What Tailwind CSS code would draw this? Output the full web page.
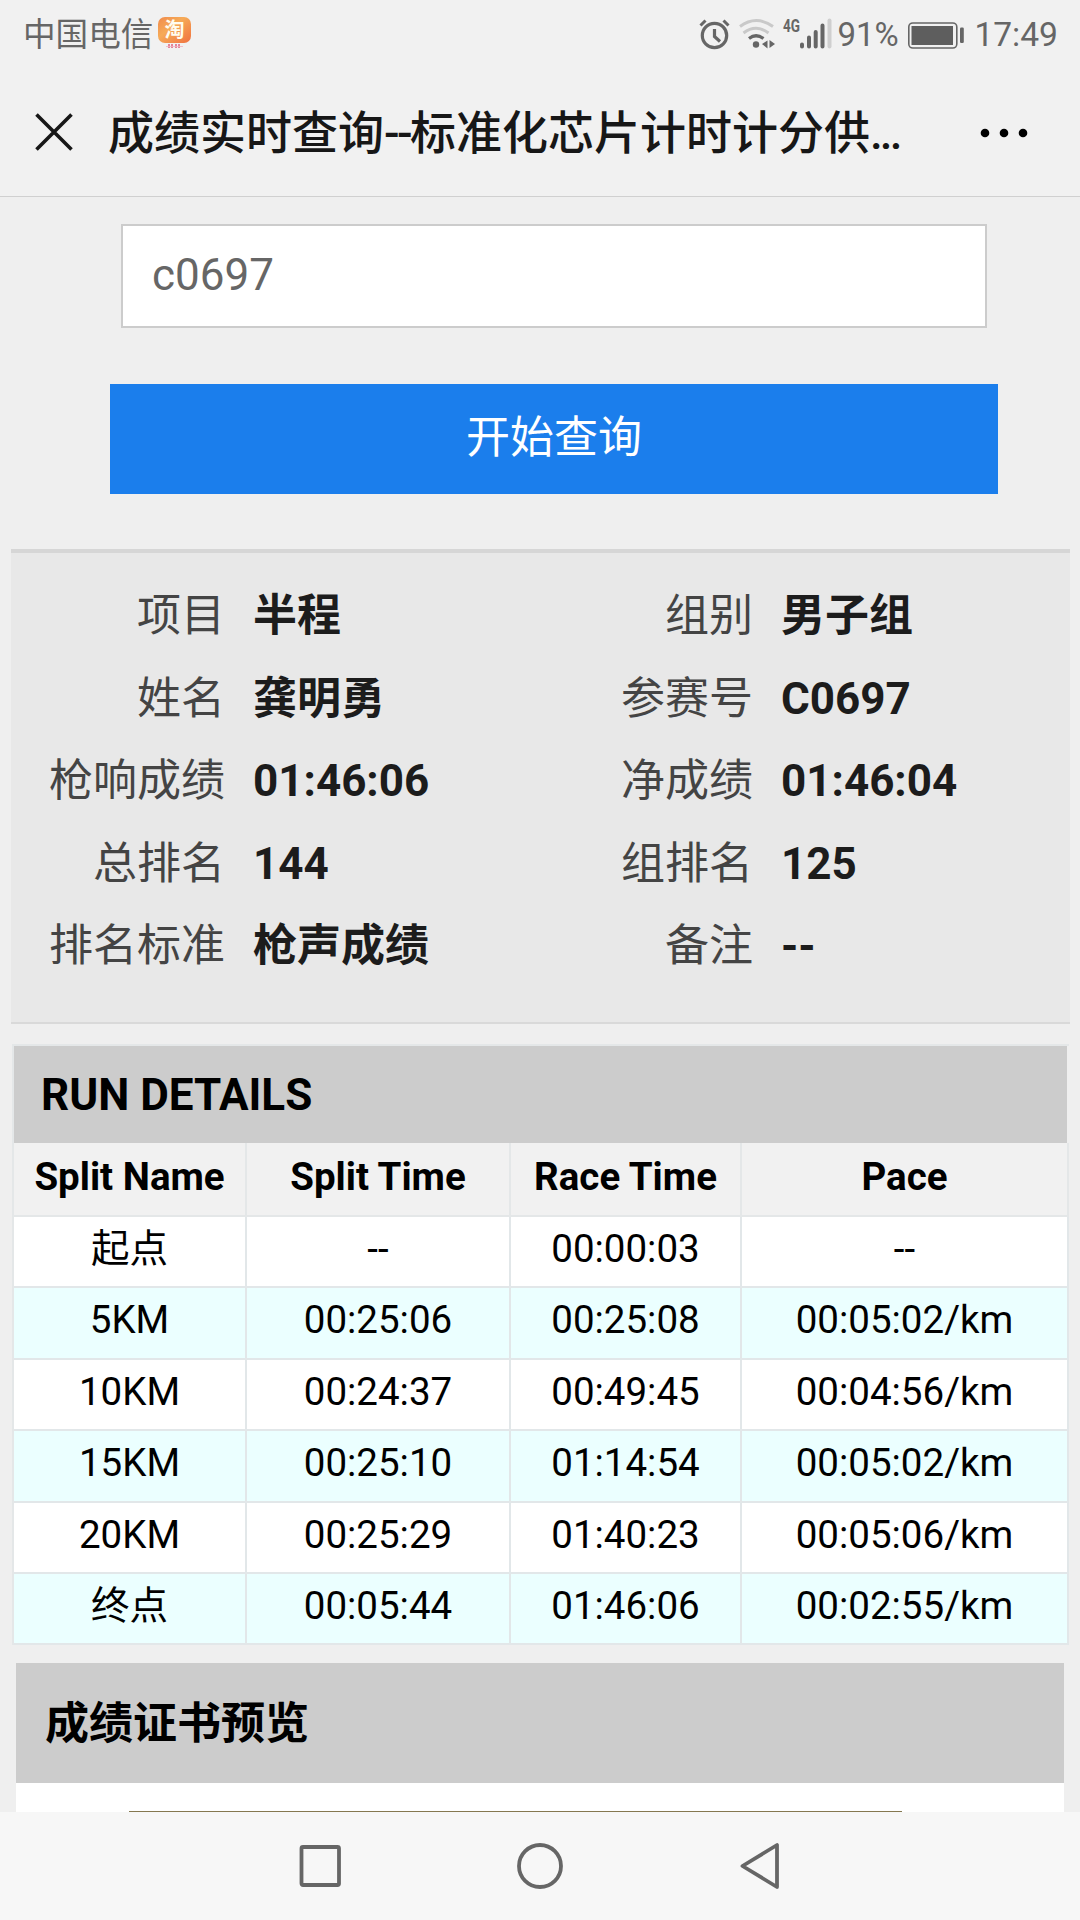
<!DOCTYPE html>
<html lang="zh-CN">
<head>
<meta charset="utf-8">
<title>成绩实时查询</title>
<script src="https://cdn.jsdelivr.net/npm/@tailwindcss/browser@4"></script>
</head>
<body class="bg-[#efefef]">
<div class="flex h-[1920px] w-[1080px] flex-col overflow-hidden bg-[#efefef] font-[Roboto,'Noto_Sans_CJK_SC',sans-serif] text-black">

  <!-- Status bar and title -->
  <header class="h-[197px] shrink-0 border-b border-[#d0d0d0] bg-[#f1f1f1] text-[#666]">
    <div class="flex h-[70px] items-center pl-[23px] pr-[22px]">
      <span class="w-[131px] text-[32.6px] leading-[70px] whitespace-nowrap">中国电信</span>
      <svg class="ml-[3px] h-[40px] w-[36px] overflow-visible" viewBox="0 0 36 40">
        <defs><linearGradient id="tb" x1="0" y1="0" x2="1" y2="1"><stop offset="0" stop-color="#f08a4c"/><stop offset=".4" stop-color="#f6ab58"/><stop offset="1" stop-color="#f0713f"/></linearGradient></defs>
        <rect x="1" y="2" width="33" height="26" rx="7" fill="url(#tb)"/>
        <text x="17.500" y="22" text-anchor="middle" font-size="20" font-weight="700" fill="#fffdf0" font-family="Noto Sans CJK SC, sans-serif">淘</text>
        <path d="M12 29v4M15 29v4M19 29v4M22 29v4" stroke="#e0607a" stroke-width="1.500"/>
        <path d="M9 31.500h17" stroke="#f0b0c0" stroke-width=".8"/>
      </svg>
      <svg class="ml-auto h-[40px] w-[140px]" viewBox="698 14 140 40" fill="none" stroke="#666">
        <circle cx="714.500" cy="34.500" r="12.200" stroke-width="3.200"/>
        <path d="M714.500 28v7.500l5.500 5" stroke-width="3.200"/>
        <path d="M700.500 24.500l5-5M728.500 24.500l-5-5" stroke-width="3"/>
        <path d="M740 25.500q16-12 33 0" stroke="#c9c9c9" stroke-width="3"/>
        <path d="M743.500 32q12.500-9.500 25 0" stroke="#c9c9c9" stroke-width="3"/>
        <path d="M749 37.500q7-5.500 14.500 0" stroke-width="3.200"/>
        <circle cx="756" cy="43.500" r="3.200" fill="#666" stroke="none"/>
        <path d="M767.500 39.500v8l-5.500-4.500zM769.500 39v8l5.500-4z" fill="#666" stroke="none"/>
        <text x="783" y="31" font-size="18" font-weight="700" textLength="17" lengthAdjust="spacingAndGlyphs" fill="#666" stroke="none" font-family="Roboto, sans-serif">4G</text>
        <path d="M802 45.500v-2M809 45.500v-9M815.700 45.500v-14.500M822.500 45.500v-21" stroke-width="4" stroke-linecap="round"/>
        <path d="M829.500 45.500v-26" stroke="#cfcfcf" stroke-width="4" stroke-linecap="round"/>
      </svg>
      <span class="w-[63px] whitespace-nowrap text-[33px] leading-[70px] -ml-px">91%</span>
      <svg class="ml-[7px] h-[30px] w-[58px]" viewBox="907 18 58 30">
        <rect x="908.800" y="21" width="48" height="25" rx="4" fill="none" stroke="#666" stroke-width="1.600"/>
        <rect x="911.500" y="24" width="41.500" height="19" fill="#5e5e5e"/>
        <rect x="960" y="25.500" width="3.800" height="15.500" rx="1.200" fill="#666"/>
      </svg>
      <span class="ml-[9px] whitespace-nowrap text-[33.6px] leading-[70px]">17:49</span>
    </div>
    <div class="flex h-[126px] items-center pb-px pl-[35px]">
      <svg class="h-[40px] w-[40px]" viewBox="0 0 40 40"><path d="M1.500 1.500l35 35M36.500 1.500l-35 35" stroke="#171717" stroke-width="3.600"/></svg>
      <h1 class="ml-[33px] w-[794px] whitespace-nowrap pt-px text-[46px] leading-[60px] font-medium text-[#171717]">成绩实时查询<span class="tracking-[-2.6px]">--</span>标准化芯片计时计分供<span class="tracking-[-3px]">...</span></h1>
      <svg class="ml-[77px] h-[10px] w-[50px]" viewBox="0 0 50 10"><circle cx="6" cy="5" r="4.300"/><circle cx="25" cy="5" r="4.300"/><circle cx="44" cy="5" r="4.300"/></svg>
    </div>
  </header>

  <main class="h-[1615px] shrink-0 overflow-hidden">
    <!-- Search form -->
    <form class="pt-[27px]">
      <div class="ml-[121px] h-[104px] w-[866px] border-2 border-[#ccc] bg-white pl-[29px] text-[44px] leading-[98px] text-[#666]">c0697</div>
      <button type="button" class="mt-[56px] ml-[110px] block h-[110px] w-[888px] bg-[#1b7eec] text-[44px] leading-[108px] pb-[2px] text-white">开始查询</button>
    </form>

    <!-- Result summary -->
    <section class="mt-[55px] ml-[11px] h-[475px] w-[1059px] border-t-4 border-b-2 border-t-[#d6d6d6] border-b-[#d9d9d9] bg-[#e8e8e8] pt-[22px]">
      <dl class="grid auto-rows-[82.6px] grid-cols-[214px_314px_214px_1fr] text-[44px] leading-[82px] whitespace-nowrap [&>dd]:pl-[28px] [&>dd]:font-bold [&>dd]:text-[#1c1c1c] [&>dt]:text-right [&>dt]:text-[#444]">
        <dt>项目</dt><dd>半程</dd><dt>组别</dt><dd>男子组</dd>
        <dt>姓名</dt><dd>龚明勇</dd><dt>参赛号</dt><dd>C0697</dd>
        <dt>枪响成绩</dt><dd>01:46:06</dd><dt>净成绩</dt><dd>01:46:04</dd>
        <dt>总排名</dt><dd>144</dd><dt>组排名</dt><dd>125</dd>
        <dt>排名标准</dt><dd>枪声成绩</dd><dt>备注</dt><dd>--</dd>
      </dl>
    </section>

    <!-- Split times -->
    <section class="mt-[20px] ml-[12px] w-[1057px] border-t-2 border-l-2 border-[#e4e7e8]">
      <h2 class="mr-[2px] h-[97px] bg-[#ccc] pl-[27px] text-[44px] leading-[99px] font-bold">RUN DETAILS</h2>
      <div class="grid h-[74px] grid-cols-[233px_264px_231px_327px] bg-[#f1f1f1] text-center text-[38.5px] leading-[68px] font-bold [&>*]:border-r-2 [&>*]:border-b-2 [&>*]:border-[#e4e7e8]">
        <div>Split Name</div><div>Split Time</div><div>Race Time</div><div>Pace</div>
      </div>
      <div class="grid auto-rows-[71.4px] grid-cols-[233px_264px_231px_327px] text-center text-[38.5px] leading-[63px] [&>*]:border-r-2 [&>*]:border-b-2 [&>*]:border-[#e2e7e9] [&>*]:bg-white [&>*:nth-child(8n+5)]:bg-[#ebffff] [&>*:nth-child(8n+6)]:bg-[#ebffff] [&>*:nth-child(8n+7)]:bg-[#ebffff] [&>*:nth-child(8n+8)]:bg-[#ebffff]">
        <div>起点</div><div>--</div><div>00:00:03</div><div>--</div>
        <div>5KM</div><div>00:25:06</div><div>00:25:08</div><div>00:05:02/km</div>
        <div>10KM</div><div>00:24:37</div><div>00:49:45</div><div>00:04:56/km</div>
        <div>15KM</div><div>00:25:10</div><div>01:14:54</div><div>00:05:02/km</div>
        <div>20KM</div><div>00:25:29</div><div>01:40:23</div><div>00:05:06/km</div>
        <div>终点</div><div>00:05:44</div><div>01:46:06</div><div>00:02:55/km</div>
      </div>
    </section>

    <!-- Certificate preview -->
    <section class="mt-[17.6px] ml-[16px] w-[1048px] bg-white">
      <h2 class="h-[120px] bg-[#ccc] pl-[29px] text-[44px] leading-[122px] font-bold">成绩证书预览</h2>
      <div class="pt-[28px] pl-[113px]"><div class="h-[20px] w-[773px] border-t border-[#857850] bg-[#fff6df]"></div></div>
    </section>
  </main>

  <!-- Navigation keys -->
  <nav class="flex h-[108px] shrink-0 items-center bg-[#f7f7f7] pl-[298px]">
    <svg class="h-[48px] w-[44px]" viewBox="0 0 44 48" fill="none" stroke="#666" stroke-width="3.800"><rect x="3.500" y="5" width="37.500" height="38" rx="1.500"/></svg>
    <svg class="ml-[174px] h-[48px] w-[48px]" viewBox="0 0 48 48" fill="none" stroke="#666" stroke-width="3.800"><circle cx="24" cy="24" r="21"/></svg>
    <svg class="ml-[174px] h-[48px] w-[44px]" viewBox="0 0 44 48" fill="none" stroke="#666" stroke-width="3.800" stroke-linejoin="round"><path d="M4.500 24L39 3v42z"/></svg>
  </nav>
</div>
</body>
</html>
